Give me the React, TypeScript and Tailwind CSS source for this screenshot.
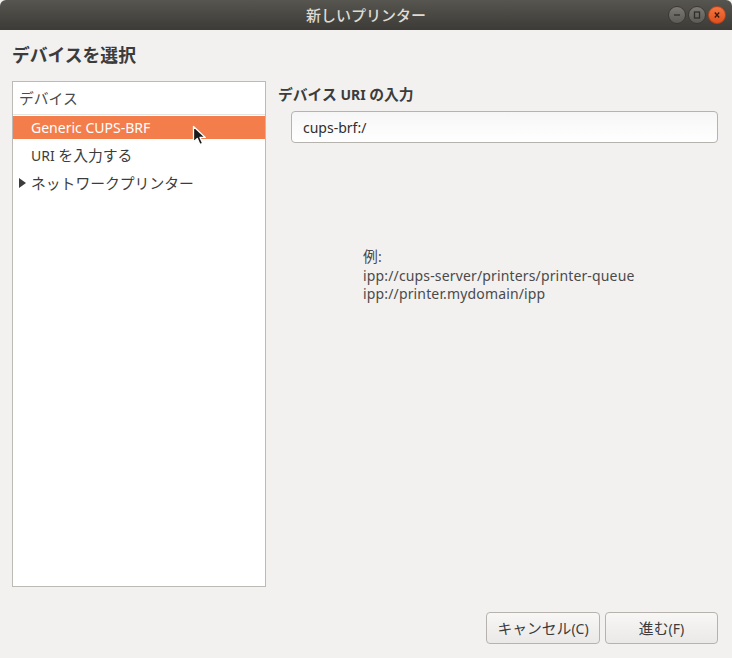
import React from "react";

const font = { fontFamily: '"Noto Sans", "Noto Sans CJK JP", sans-serif' };

// Japanese glyphs render a touch larger than the Latin ones in the original theme
function Jp({ children }: { children: React.ReactNode }) {
  return <span className="text-[14.8px]">{children}</span>;
}

function WindowButton({ kind }: { kind: "min" | "max" | "close" }) {
  const isClose = kind === "close";
  return (
    <div
      className={`flex h-[18px] w-[18px] items-center justify-center rounded-full border ${
        isClose
          ? "border-[#b8431a] bg-gradient-to-b from-[#f4753f] to-[#e0501d]"
          : "border-[#3a3935] bg-gradient-to-b from-[#7b7972] to-[#5c5b56]"
      }`}
    >
      <svg width="10" height="10" viewBox="0 0 10 10" fill="none" stroke={isClose ? "#3a1a0c" : "#2f2e2b"} strokeWidth="1.3">
        {kind === "min" && <path d="M2 5h6" />}
        {kind === "max" && <rect x="2.5" y="2" width="5" height="6" />}
        {kind === "close" && <path d="M2.8 2.5l4.4 5M7.2 2.5l-4.4 5" />}
      </svg>
    </div>
  );
}

function Cursor() {
  return (
    <svg className="absolute left-[192px] top-[125px]" width="16" height="22" viewBox="0 0 16 22">
      <path
        d="M1.5 1.5v15.5l3.8-3.6 2.6 6.1 2.7-1.2-2.6-5.9h5.3z"
        fill="#1a1a1a"
        stroke="#ffffff"
        strokeWidth="1.3"
        strokeLinejoin="round"
      />
    </svg>
  );
}

export default function App() {
  return (
    <div className="relative flex h-[658px] w-[732px] flex-col bg-[#f2f1f0] text-[14px] text-[#3c3c3c]" style={font}>
      <div className="relative flex h-[30px] shrink-0 items-center justify-center rounded-t-[6px] bg-gradient-to-b from-[#57554f] to-[#3c3b37]">
        <span className="text-[15px] font-medium text-[#dfdbd2]">新しいプリンター</span>
        <div className="absolute right-[6px] top-[6px] flex gap-[2px]">
          <WindowButton kind="min" />
          <WindowButton kind="max" />
          <WindowButton kind="close" />
        </div>
      </div>

      <div className="flex flex-1 flex-col px-3 pt-[14px]">
        <h1 className="h-[23px] text-[17.8px] font-bold leading-[23px] text-[#3c3c3c]">デバイスを選択</h1>

        <div className="mt-[14px] flex gap-3">
          <div className="h-[506px] w-[254px] shrink-0 border border-[#bdbab5] bg-white">
            <div className="flex h-[33px] items-center border-b border-[#e6e5e3] pl-[6px] text-[#4a4a4a]">
              <Jp>デバイス</Jp>
            </div>
            <div className="flex flex-col gap-[4px] pt-[1px]">
              <div className="flex h-[23px] items-center bg-[#f37d4b] pl-[18px] text-white">Generic CUPS-BRF</div>
              <div className="flex h-[24px] items-center whitespace-pre pl-[18px]">
                URI <Jp>を入力する</Jp>
              </div>
              <div className="flex h-[24px] items-center">
                <span className="flex w-[18px] justify-center pl-[1px]">
                  <svg width="7" height="10" viewBox="0 0 7 10">
                    <path d="M0 0l7 5-7 5z" fill="#3c3c3c" />
                  </svg>
                </span>
                <Jp>ネットワークプリンター</Jp>
              </div>
            </div>
          </div>

          <div className="flex flex-1 flex-col pr-[2px]">
            <div className="flex h-[26px] items-center whitespace-pre font-bold">
              <Jp>デバイス</Jp> URI <Jp>の入力</Jp>
            </div>
            <div className="ml-[13px] mt-[4px] flex h-[32px] items-center rounded-[4px] border border-[#b6b3ae] bg-gradient-to-b from-[#f6f6f6] to-white px-[11px] text-[#2e2e2e]">
              cups-brf:/
            </div>
            <div className="ml-[85px] mt-[104px] flex flex-col leading-[18.5px] tracking-[0.15px] text-[#4a4a4a]">
              <span>
                <Jp>例</Jp>:
              </span>
              <span>ipp://cups-server/printers/printer-queue</span>
              <span>ipp://printer.mydomain/ipp</span>
            </div>
          </div>
        </div>

        <div className="mt-[25px] flex justify-end gap-[5px] pr-[2px]">
          <button className="h-[32px] w-[114px] rounded-[4px] border border-[#b6b3ae] bg-gradient-to-b from-[#f8f7f6] to-[#ebe9e7] text-[#3c3c3c]">
            <Jp>キャンセル</Jp>(C)
          </button>
          <button className="h-[32px] w-[113px] rounded-[4px] border border-[#b6b3ae] bg-gradient-to-b from-[#f8f7f6] to-[#ebe9e7] text-[#3c3c3c]">
            <Jp>進む</Jp>(F)
          </button>
        </div>
      </div>

      <Cursor />
    </div>
  );
}
